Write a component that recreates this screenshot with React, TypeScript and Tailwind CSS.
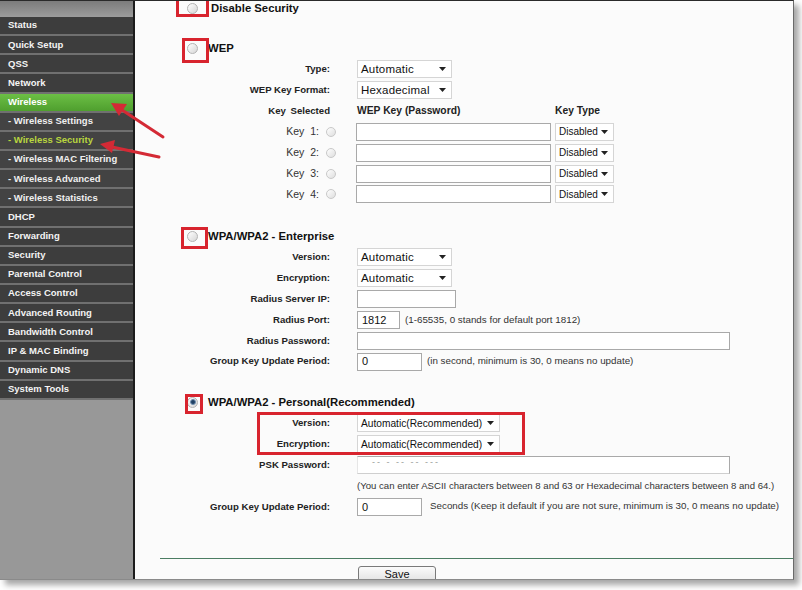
import React from "react";

const menu: { t: string; kind?: "active" | "sub" | "subActive" }[] = [
  { t: "Status" },
  { t: "Quick Setup" },
  { t: "QSS" },
  { t: "Network" },
  { t: "Wireless", kind: "active" },
  { t: "- Wireless Settings", kind: "sub" },
  { t: "- Wireless Security", kind: "subActive" },
  { t: "- Wireless MAC Filtering", kind: "sub" },
  { t: "- Wireless Advanced", kind: "sub" },
  { t: "- Wireless Statistics", kind: "sub" },
  { t: "DHCP" },
  { t: "Forwarding" },
  { t: "Security" },
  { t: "Parental Control" },
  { t: "Access Control" },
  { t: "Advanced Routing" },
  { t: "Bandwidth Control" },
  { t: "IP & MAC Binding" },
  { t: "Dynamic DNS" },
  { t: "System Tools" },
];

function Radio({ checked, small }: { checked?: boolean; small?: boolean }) {
  return (
    <span
      className={
        small
          ? "inline-flex items-center justify-center w-[10px] h-[10px] rounded-full border border-[#c9c9c9] bg-gradient-to-br from-[#ffffff] to-[#dedede] shrink-0 align-middle"
          : "inline-flex items-center justify-center w-[11px] h-[11px] rounded-full border border-[#b3b3b3] bg-gradient-to-br from-[#ffffff] to-[#d6d6d6] shrink-0 align-middle"
      }
    >
      {checked ? <span className="w-[6px] h-[6px] rounded-full bg-[#1f3f63] border border-[#6f8fb0]" /> : null}
    </span>
  );
}

function Caret() {
  return (
    <svg width="7" height="4" viewBox="0 0 7 4" className="shrink-0">
      <path d="M0 0H7L3.5 4Z" fill="#222" />
    </svg>
  );
}

function Select({ value, cls }: { value: string; cls: string }) {
  return (
    <div className={"flex items-center justify-between h-[18px] bg-white border border-[#d5d5d5] pl-[3px] pr-[5px] text-[#111] " + cls}>
      <span className="whitespace-nowrap">{value}</span>
      <Caret />
    </div>
  );
}

function Input({ cls, value }: { cls: string; value?: string }) {
  return (
    <div className={"flex items-center h-[18px] bg-white border border-[#a9a9a9] pl-[4px] text-[11px] text-[#111] " + cls}>
      {value}
    </div>
  );
}

function Row({ label, children, bold = true }: { label: string; children?: React.ReactNode; bold?: boolean }) {
  return (
    <div className="flex items-center h-[20.85px]">
      <div className={"w-[195px] text-right whitespace-nowrap text-[9.6px] text-[#222] " + (bold ? "font-bold" : "")}>{label}</div>
      <div className="ml-[27px] flex items-center">{children}</div>
    </div>
  );
}

function KeyRow({ n }: { n: number }) {
  return (
    <div className="flex items-center h-[20.85px]">
      <div className="w-[184px] text-right text-[10.5px] text-[#333] [word-spacing:3px]">Key {n}:</div>
      <div className="ml-[7px] flex items-center">
        <Radio small />
      </div>
      <div className="ml-[20px] flex items-center">
        <Input cls="w-[195px]" />
        <div className="ml-[4px]">
          <Select value="Disabled" cls="w-[59px] text-[10px]" />
        </div>
      </div>
    </div>
  );
}

function Title({ text, checked }: { text: string; checked?: boolean }) {
  return (
    <div className="flex items-center h-[21px]">
      <div className="ml-[52px] flex items-center">
        <Radio checked={checked} />
      </div>
      <div className="ml-[10px] text-[11.3px] font-bold text-[#111] whitespace-nowrap">{text}</div>
    </div>
  );
}

export default function App() {
  return (
    <div className="relative w-[802px] h-[590px] bg-white overflow-hidden font-['Liberation_Sans',Arial,sans-serif]">
      <div className="w-[794px] h-[580px] flex border-t border-t-[#2a2a2a] border-r border-r-[#6a6a6a] border-b border-b-[#8a8a8a] shadow-[5px_5px_6px_rgba(0,0,0,0.35)] overflow-hidden">
        <aside className="w-[135px] shrink-0 bg-[#989898] border-r-2 border-r-[#1c1c1c] flex flex-col">
          <div className="h-[16px] shrink-0 bg-gradient-to-b from-[#7c7c7c] to-[#9c9c9c]" />
          {menu.map((m) => (
            <div
              key={m.t}
              className={
                "h-[19.15px] shrink-0 flex items-center pl-[8px] border-b-2 border-b-[#707070] text-[9.5px] font-bold whitespace-nowrap " +
                (m.kind === "active"
                  ? "bg-gradient-to-b from-[#6cbf45] to-[#4f9f2e] text-white"
                  : m.kind === "subActive"
                  ? "bg-[#434343] text-[#b9d63f]"
                  : m.kind === "sub"
                  ? "bg-[#434343] text-[#f0f0f0]"
                  : "bg-[#3d3d3d] text-[#f4f4f4]")
              }
            >
              {m.t}
            </div>
          ))}
        </aside>

        <main className="relative flex-1 bg-[#fbfbfb] overflow-hidden">
          {/* Disable Security */}
          <div className="flex items-center h-[15px]">
            <div className="ml-[52px] flex items-center">
              <Radio />
            </div>
            <div className="ml-[13px] text-[11.3px] font-bold text-[#111]">Disable Security</div>
          </div>

          <div className="mt-[22px]">
            <Title text="WEP" />
          </div>
          <Row label="Type:">
            <Select value="Automatic" cls="w-[95px] text-[11.5px] tracking-[0.2px]" />
          </Row>
          <Row label="WEP Key Format:">
            <Select value="Hexadecimal" cls="w-[95px] text-[11.5px] tracking-[0.2px]" />
          </Row>
          <div className="flex items-center h-[20.85px] text-[9.6px] font-bold text-[#222]">
            <div className="w-[195px] text-right [word-spacing:2px]">Key Selected</div>
            <div className="ml-[27px] w-[198px] text-[10.3px]">WEP Key (Password)</div>
            <div className="text-[10.3px]">Key Type</div>
          </div>
          <KeyRow n={1} />
          <KeyRow n={2} />
          <KeyRow n={3} />
          <KeyRow n={4} />

          <div className="mt-[21px]">
            <Title text="WPA/WPA2 - Enterprise" />
          </div>
          <Row label="Version:">
            <Select value="Automatic" cls="w-[95px] text-[11.5px] tracking-[0.2px]" />
          </Row>
          <Row label="Encryption:">
            <Select value="Automatic" cls="w-[95px] text-[11.5px] tracking-[0.2px]" />
          </Row>
          <Row label="Radius Server IP:">
            <Input cls="w-[99px]" />
          </Row>
          <Row label="Radius Port:">
            <Input cls="w-[43px]" value="1812" />
            <span className="ml-[5px] text-[9.8px] text-[#333] whitespace-nowrap">(1-65535, 0 stands for default port 1812)</span>
          </Row>
          <Row label="Radius Password:">
            <Input cls="w-[373px]" />
          </Row>
          <Row label="Group Key Update Period:">
            <Input cls="w-[65px]" value="0" />
            <span className="ml-[5px] text-[9.8px] text-[#333] whitespace-nowrap">(in second, minimum is 30, 0 means no update)</span>
          </Row>

          <div className="mt-[20px]">
            <Title text="WPA/WPA2 - Personal(Recommended)" checked />
          </div>
          <Row label="Version:">
            <Select value="Automatic(Recommended)" cls="w-[143px] text-[10.2px]" />
          </Row>
          <Row label="Encryption:">
            <Select value="Automatic(Recommended)" cls="w-[143px] text-[10.2px]" />
          </Row>
          <Row label="PSK Password:">
            <div className="flex items-start h-[18px] w-[373px] bg-white border border-[#a9a9a9] border-l-[#e6e6e6] border-b-[#cfcfcf] pl-[14px] text-[9px] leading-[10px] text-[#9a9a9a] tracking-[2px]">
              -- - -- -- ---
            </div>
          </Row>
          <div className="flex items-center h-[20.85px]">
            <div className="ml-[222px] text-[9.6px] text-[#333] whitespace-nowrap">
              (You can enter ASCII characters between 8 and 63 or Hexadecimal characters between 8 and 64.)
            </div>
          </div>
          <Row label="Group Key Update Period:">
            <Input cls="w-[65px]" value="0" />
            <span className="ml-[8px] text-[9.8px] text-[#333] whitespace-nowrap">
              Seconds (Keep it default if you are not sure, minimum is 30, 0 means no update)
            </span>
          </Row>

          <div className="mt-[41px] ml-[25px] h-px bg-[#4b7d63]" />
          <div className="mt-[7px] ml-[223px] w-[78px] h-[20px] rounded-t-[3px] border border-[#7a7a7a] bg-gradient-to-b from-[#fbfbfb] to-[#dcdcdc] flex justify-center items-start pt-[1px] text-[11px] leading-[12px] text-[#111]">
            Save
          </div>

          {/* annotation boxes */}
          <div className="absolute left-[41px] top-[-4px] w-[33px] h-[20px] border-[3px] border-[#d8242e]" />
          <div className="absolute left-[47px] top-[37px] w-[27px] h-[25px] border-[3px] border-[#d8242e]" />
          <div className="absolute left-[46px] top-[226px] w-[27px] h-[22px] border-[3px] border-[#d8242e]" />
          <div className="absolute left-[50px] top-[393px] w-[18px] h-[20px] border-[3px] border-[#d8242e]" />
          <div className="absolute left-[122px] top-[411px] w-[268px] h-[43px] border-[3px] border-[#d8242e]" />
        </main>
      </div>

      <svg className="absolute left-0 top-0 pointer-events-none" width="802" height="590" viewBox="0 0 802 590">
        <line x1="163" y1="137" x2="122" y2="110" stroke="#d42a35" strokeWidth="3" strokeLinecap="round" />
        <path d="M111 103 L127 104 L119 116 Z" fill="#d42a35" />
        <line x1="159" y1="157" x2="112" y2="147" stroke="#d42a35" strokeWidth="3" strokeLinecap="round" />
        <path d="M100 144 L115 140 L112 153 Z" fill="#d42a35" />
      </svg>
    </div>
  );
}
